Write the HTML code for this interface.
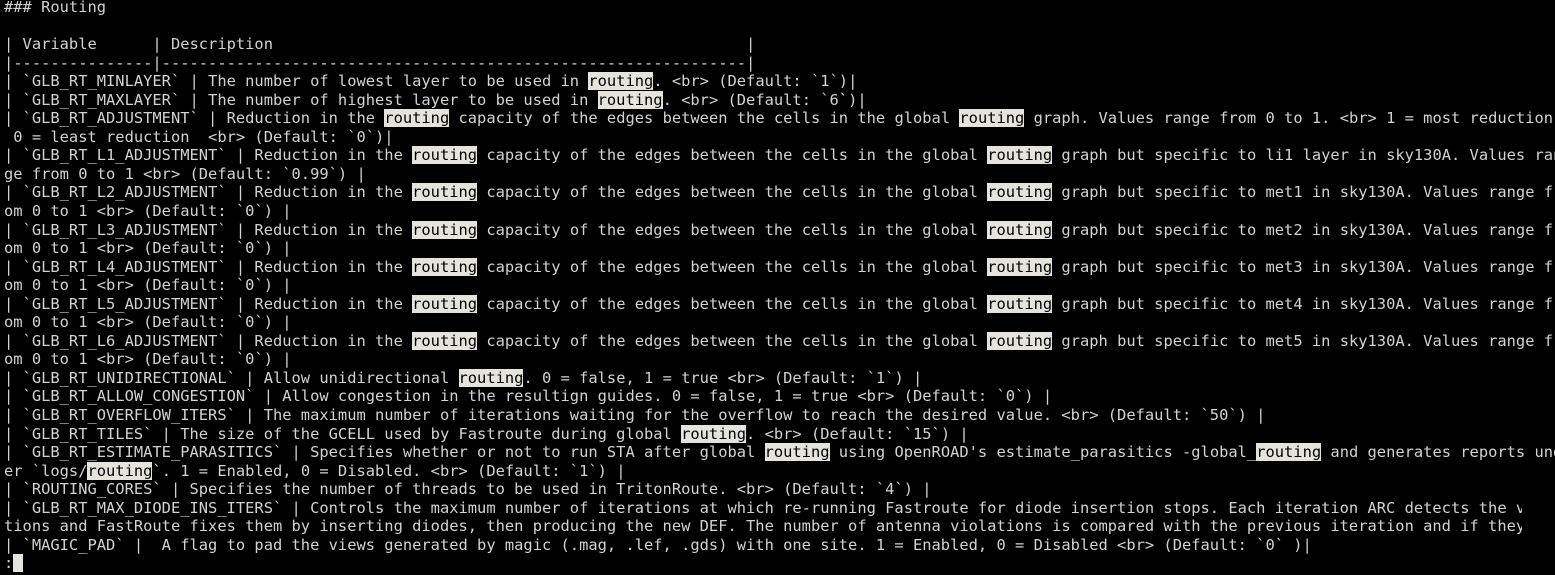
<!DOCTYPE html>
<html><head><meta charset="utf-8"><style>
html,body{margin:0;padding:0;background:#000;width:1555px;height:575px;overflow:hidden}
pre{margin:0;position:absolute;left:4px;top:-2px;font-family:"DejaVu Sans Mono","Liberation Mono",monospace;font-size:15.42px;line-height:18.55px;color:#d2d2d0;white-space:pre}
.h{background:#e4e4dc;color:#000}
.c{background:#e4e4dc;color:#000}
</style></head><body><pre>### Routing

| Variable      | Description                                                   |
|---------------|---------------------------------------------------------------|
| `GLB_RT_MINLAYER` | The number of lowest layer to be used in <span class="h">routing</span>. &lt;br&gt; (Default: `1`)|
| `GLB_RT_MAXLAYER` | The number of highest layer to be used in <span class="h">routing</span>. &lt;br&gt; (Default: `6`)|
| `GLB_RT_ADJUSTMENT` | Reduction in the <span class="h">routing</span> capacity of the edges between the cells in the global <span class="h">routing</span> graph. Values range from 0 to 1. &lt;br&gt; 1 = most reduction
 0 = least reduction  &lt;br&gt; (Default: `0`)|
| `GLB_RT_L1_ADJUSTMENT` | Reduction in the <span class="h">routing</span> capacity of the edges between the cells in the global <span class="h">routing</span> graph but specific to li1 layer in sky130A. Values ran
ge from 0 to 1 &lt;br&gt; (Default: `0.99`) |
| `GLB_RT_L2_ADJUSTMENT` | Reduction in the <span class="h">routing</span> capacity of the edges between the cells in the global <span class="h">routing</span> graph but specific to met1 in sky130A. Values range fr
om 0 to 1 &lt;br&gt; (Default: `0`) |
| `GLB_RT_L3_ADJUSTMENT` | Reduction in the <span class="h">routing</span> capacity of the edges between the cells in the global <span class="h">routing</span> graph but specific to met2 in sky130A. Values range fr
om 0 to 1 &lt;br&gt; (Default: `0`) |
| `GLB_RT_L4_ADJUSTMENT` | Reduction in the <span class="h">routing</span> capacity of the edges between the cells in the global <span class="h">routing</span> graph but specific to met3 in sky130A. Values range fr
om 0 to 1 &lt;br&gt; (Default: `0`) |
| `GLB_RT_L5_ADJUSTMENT` | Reduction in the <span class="h">routing</span> capacity of the edges between the cells in the global <span class="h">routing</span> graph but specific to met4 in sky130A. Values range fr
om 0 to 1 &lt;br&gt; (Default: `0`) |
| `GLB_RT_L6_ADJUSTMENT` | Reduction in the <span class="h">routing</span> capacity of the edges between the cells in the global <span class="h">routing</span> graph but specific to met5 in sky130A. Values range fr
om 0 to 1 &lt;br&gt; (Default: `0`) |
| `GLB_RT_UNIDIRECTIONAL` | Allow unidirectional <span class="h">routing</span>. 0 = false, 1 = true &lt;br&gt; (Default: `1`) |
| `GLB_RT_ALLOW_CONGESTION` | Allow congestion in the resultign guides. 0 = false, 1 = true &lt;br&gt; (Default: `0`) |
| `GLB_RT_OVERFLOW_ITERS` | The maximum number of iterations waiting for the overflow to reach the desired value. &lt;br&gt; (Default: `50`) |
| `GLB_RT_TILES` | The size of the GCELL used by Fastroute during global <span class="h">routing</span>. &lt;br&gt; (Default: `15`) |
| `GLB_RT_ESTIMATE_PARASITICS` | Specifies whether or not to run STA after global <span class="h">routing</span> using OpenROAD's estimate_parasitics -global_<span class="h">routing</span> and generates reports und
er `logs/<span class="h">routing</span>`. 1 = Enabled, 0 = Disabled. &lt;br&gt; (Default: `1`) |
| `ROUTING_CORES` | Specifies the number of threads to be used in TritonRoute. &lt;br&gt; (Default: `4`) |
| `GLB_RT_MAX_DIODE_INS_ITERS` | Controls the maximum number of iterations at which re-running Fastroute for diode insertion stops. Each iteration ARC detects the v
tions and FastRoute fixes them by inserting diodes, then producing the new DEF. The number of antenna violations is compared with the previous iteration and if they
| `MAGIC_PAD` |  A flag to pad the views generated by magic (.mag, .lef, .gds) with one site. 1 = Enabled, 0 = Disabled &lt;br&gt; (Default: `0` )|
:<span class="c"> </span></pre>
<div style="position:absolute;left:1522px;top:500px;width:40px;height:38px;background:#000"></div>
</body></html>
